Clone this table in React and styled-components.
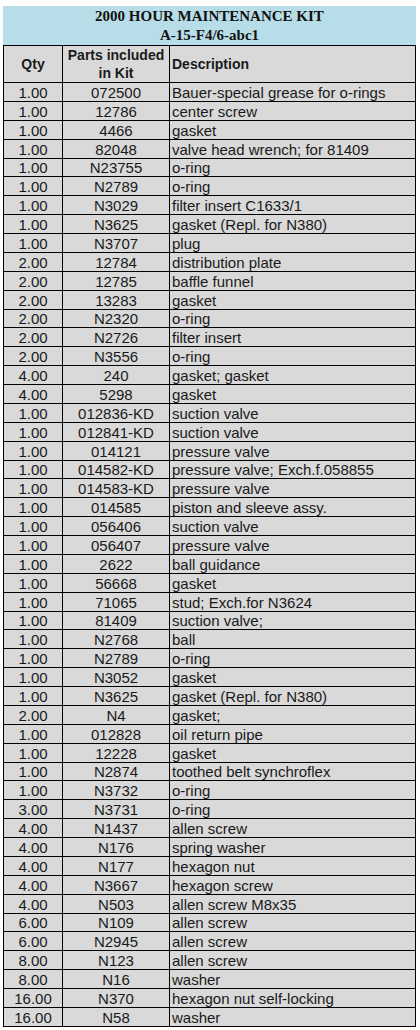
import React from "react";
import styled, { createGlobalStyle } from "styled-components";

const Global = createGlobalStyle`
  html, body { margin: 0; padding: 0; background: #ffffff; }
`;

const Page = styled.div`
  padding: 6px 4px 0 3px;
  width: 413px;
  box-sizing: content-box;
`;

const TitleBlock = styled.div`
  background: #b7dde8;
  height: 39px;
  display: flex;
  flex-direction: column;
  align-items: center;
  justify-content: center;
  font-family: "Liberation Serif", "Times New Roman", serif;
  font-weight: bold;
  font-size: 15px;
  line-height: 19px;
  color: #111;
`;

const Table = styled.table`
  width: 413px;
  border-collapse: collapse;
  table-layout: fixed;
  font-family: "Liberation Sans", Arial, sans-serif;
  font-size: 15px;
  color: #1a1a1a;
`;

const HeadCell = styled.th`
  background: #d9d9d9;
  border: 1px solid #000;
  height: 35px;
  padding: 0 ${(p) => (p.$align === "left" ? "2px" : "0")};
  font-weight: bold;
  font-size: 14px;
  line-height: 18px;
  white-space: nowrap;
  text-align: ${(p) => p.$align || "center"};
  vertical-align: middle;
`;

const Row = styled.tr`
  height: 18.88px;
`;

const Cell = styled.td`
  background: #d9d9d9;
  border: 1px solid #000;
  padding: 0 ${(p) => (p.$align === "left" ? "2px" : "0")};
  line-height: 17px;
  white-space: nowrap;
  overflow: hidden;
  text-align: ${(p) => p.$align || "center"};
  vertical-align: bottom;
`;

const rows = [
  ["1.00", "072500", "Bauer-special grease for o-rings"],
  ["1.00", "12786", "center screw"],
  ["1.00", "4466", "gasket"],
  ["1.00", "82048", "valve head wrench; for 81409"],
  ["1.00", "N23755", "o-ring"],
  ["1.00", "N2789", "o-ring"],
  ["1.00", "N3029", "filter insert C1633/1"],
  ["1.00", "N3625", "gasket (Repl. for N380)"],
  ["1.00", "N3707", "plug"],
  ["2.00", "12784", "distribution plate"],
  ["2.00", "12785", "baffle funnel"],
  ["2.00", "13283", "gasket"],
  ["2.00", "N2320", "o-ring"],
  ["2.00", "N2726", "filter insert"],
  ["2.00", "N3556", "o-ring"],
  ["4.00", "240", "gasket; gasket"],
  ["4.00", "5298", "gasket"],
  ["1.00", "012836-KD", "suction valve"],
  ["1.00", "012841-KD", "suction valve"],
  ["1.00", "014121", "pressure valve"],
  ["1.00", "014582-KD", "pressure valve; Exch.f.058855"],
  ["1.00", "014583-KD", "pressure valve"],
  ["1.00", "014585", "piston and sleeve assy."],
  ["1.00", "056406", "suction valve"],
  ["1.00", "056407", "pressure valve"],
  ["1.00", "2622", "ball guidance"],
  ["1.00", "56668", "gasket"],
  ["1.00", "71065", "stud; Exch.for N3624"],
  ["1.00", "81409", "suction valve;"],
  ["1.00", "N2768", "ball"],
  ["1.00", "N2789", "o-ring"],
  ["1.00", "N3052", "gasket"],
  ["1.00", "N3625", "gasket (Repl. for N380)"],
  ["2.00", "N4", "gasket;"],
  ["1.00", "012828", "oil return pipe"],
  ["1.00", "12228", "gasket"],
  ["1.00", "N2874", "toothed belt synchroflex"],
  ["1.00", "N3732", "o-ring"],
  ["3.00", "N3731", "o-ring"],
  ["4.00", "N1437", "allen screw"],
  ["4.00", "N176", "spring washer"],
  ["4.00", "N177", "hexagon nut"],
  ["4.00", "N3667", "hexagon screw"],
  ["4.00", "N503", "allen screw M8x35"],
  ["6.00", "N109", "allen screw"],
  ["6.00", "N2945", "allen screw"],
  ["8.00", "N123", "allen screw"],
  ["8.00", "N16", "washer"],
  ["16.00", "N370", "hexagon nut self-locking"],
  ["16.00", "N58", "washer"],
];

export default function App() {
  return (
    <>
      <Global />
      <Page>
        <TitleBlock>
          <div>2000 HOUR MAINTENANCE KIT</div>
          <div>A-15-F4/6-abc1</div>
        </TitleBlock>
        <Table>
          <colgroup>
            <col style={{ width: 59 }} />
            <col style={{ width: 107 }} />
            <col />
          </colgroup>
          <thead>
            <tr>
              <HeadCell>Qty</HeadCell>
              <HeadCell>
                Parts included
                <br />
                in Kit
              </HeadCell>
              <HeadCell $align="left">Description</HeadCell>
            </tr>
          </thead>
          <tbody>
            {rows.map((r, i) => (
              <Row key={i}>
                <Cell>{r[0]}</Cell>
                <Cell>{r[1]}</Cell>
                <Cell $align="left">{r[2]}</Cell>
              </Row>
            ))}
          </tbody>
        </Table>
      </Page>
    </>
  );
}
